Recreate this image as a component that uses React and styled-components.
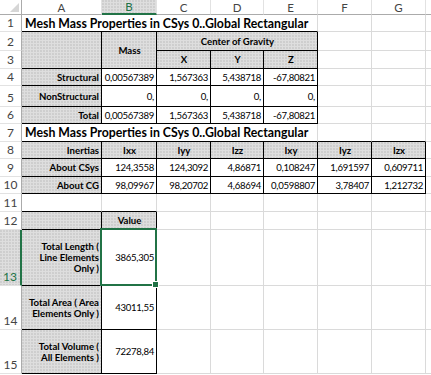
import React from "react";
import styled, { createGlobalStyle, css } from "styled-components";

const GREEN = "#217346";
const GRID = "#dadada";
const INK = "#000";

const GlobalStyle = createGlobalStyle`
  html, body {
    margin: 0;
    padding: 0;
    background: #fff;
  }
  body {
    font-family: Lato, "Open Sans", sans-serif;
  }
`;

// excel's stippled grey fill
const stipple = css`
  background-color: #dedede;
  background-image: radial-gradient(circle at 1px 1px, #c6c6c6 0.6px, transparent 0.9px);
  background-size: 3px 3px;
`;

const Sheet = styled.div`
  display: grid;
  grid-template-columns: 22px 80px 55px 54px 53px 54px 54px 54px 1fr;
  grid-template-rows: 15px 17px 19px 18px 17px 21px 17px 18px 17px 18px 17px 18px 18px 56px 44px 44px 1fr;
  width: 431px;
  height: 375px;
  overflow: hidden;
  font-family: Lato, "Open Sans", sans-serif;
`;

const Corner = styled.div`
  grid-row: 1;
  grid-column: 1;
  box-sizing: border-box;
  display: flex;
  align-items: flex-end;
  justify-content: flex-end;
  padding: 0 2px 2px 0;
  border-right: 1px solid #ababab;
  border-bottom: 1px solid #ababab;
`;

const CornerMark = styled.div`
  width: 9px;
  height: 9px;
  background: #d6d6d6;
  clip-path: polygon(100% 0, 100% 100%, 0 100%);
`;

const ColHead = styled.div`
  grid-row: 1;
  grid-column: ${(p) => p.$col};
  box-sizing: border-box;
  display: flex;
  align-items: center;
  justify-content: center;
  font-size: 11.5px;
  color: ${(p) => (p.$active ? GREEN : "#444")};
  border-right: 1px solid #e2e2e2;
  border-bottom: ${(p) => (p.$active ? `2px solid ${GREEN}` : "1px solid #ababab")};
  ${(p) => p.$active && stipple}
`;

const RowHead = styled.div`
  grid-row: ${(p) => p.$row};
  grid-column: 1;
  box-sizing: border-box;
  display: flex;
  align-items: flex-end;
  justify-content: center;
  padding-bottom: 1px;
  font-size: 12px;
  line-height: 14px;
  color: ${(p) => (p.$active ? GREEN : "#444")};
  border-bottom: 1px solid #e2e2e2;
  border-right: ${(p) => (p.$active ? `2px solid ${GREEN}` : "1px solid #ababab")};
  ${(p) => p.$active && stipple}
`;

const Cell = styled.div`
  grid-row: ${(p) => p.$row} / span ${(p) => p.$rowSpan};
  grid-column: ${(p) => p.$col} / span ${(p) => p.$colSpan};
  position: relative;
  box-sizing: border-box;
  min-width: 0;
  display: flex;
  align-items: center;
  justify-content: ${(p) => p.$justify};
  text-align: ${(p) => p.$align};
  padding: 0 2px 0 3px;
  border-right: 1px solid ${(p) => p.$right};
  border-bottom: 1px solid ${(p) => p.$bottom};
  white-space: pre;
  overflow: ${(p) => (p.$kind === "title" || p.$selected ? "visible" : "hidden")};
  color: #000;
  font-size: ${(p) => (p.$kind === "title" ? "12.3px" : "9.6px")};
  line-height: 11px;
  font-weight: ${(p) => (["title", "head", "label"].includes(p.$kind) ? 700 : 400)};
  letter-spacing: ${(p) => (p.$kind === "num" ? "-0.3px" : "0")};
  ${(p) => p.$fill && stipple}
`;

const Selection = styled.div`
  position: absolute;
  left: -2px;
  top: -2px;
  right: -1px;
  bottom: -1px;
  border: 2px solid ${GREEN};
  z-index: 2;
  pointer-events: none;
`;

const FillHandle = styled.div`
  position: absolute;
  right: -4px;
  bottom: -4px;
  width: 5px;
  height: 5px;
  background: ${GREEN};
  border: 1px solid #fff;
`;

const COLS = ["A", "B", "C", "D", "E", "F", "G", "H"];
const ROWS = 15;

const boxes = [
  [2, 1, 6, 5],
  [8, 1, 10, 7],
  [12, 1, 15, 2],
];
const filled = [
  [2, 1, 3, 5],
  [4, 1, 6, 1],
  [8, 1, 8, 7],
  [9, 1, 10, 1],
  [12, 1, 12, 2],
  [13, 1, 15, 1],
];

const inside = (list, r, c) =>
  list.some(([r1, c1, r2, c2]) => r >= r1 && r <= r2 && c >= c1 && c <= c2);

const title = "Mesh Mass Properties in CSys 0..Global Rectangular";

const content = [
  { r: 1, c: 1, cs: 5, kind: "title", text: title },
  { r: 2, c: 1, rs: 2, kind: "label", text: "" },
  { r: 2, c: 2, rs: 2, kind: "head", text: "Mass" },
  { r: 2, c: 3, cs: 3, kind: "head", text: "Center of Gravity" },
  { r: 3, c: 3, kind: "head", text: "X" },
  { r: 3, c: 4, kind: "head", text: "Y" },
  { r: 3, c: 5, kind: "head", text: "Z" },
  { r: 4, row: ["Structural", "0,00567389", "1,567363", "5,438718", "-67,80821"] },
  { r: 5, row: ["NonStructural", "0,", "0,", "0,", "0,"] },
  { r: 6, row: ["Total", "0,00567389", "1,567363", "5,438718", "-67,80821"] },
  { r: 7, c: 1, cs: 5, kind: "title", text: title },
  { r: 8, c: 1, kind: "label", text: "Inertias" },
  ...["Ixx", "Iyy", "Izz", "Ixy", "Iyz", "Izx"].map((t, i) => ({ r: 8, c: i + 2, kind: "head", text: t })),
  { r: 9, row: ["About CSys", "124,3558", "124,3092", "4,86871", "0,108247", "1,691597", "0,609711"] },
  { r: 10, row: ["About CG", "98,09967", "98,20702", "4,68694", "0,0598807", "3,78407", "1,212732"] },
  { r: 12, c: 2, kind: "head", text: "Value" },
  { r: 13, row: ["Total Length (\nLine Elements\nOnly )", "3865,305"] },
  { r: 14, row: ["Total Area ( Area\nElements Only )", "43011,55"] },
  { r: 15, row: ["Total Volume (\nAll Elements )", "72278,84"] },
];

const buildCells = () => {
  const defined = [];
  content.forEach((item) => {
    if (item.row) {
      item.row.forEach((text, i) =>
        defined.push({ r: item.r, c: i + 1, kind: i === 0 ? "label" : "num", text })
      );
    } else {
      defined.push(item);
    }
  });

  const covered = new Set();
  const cells = [];
  defined.forEach((d) => {
    const cell = { rs: 1, cs: 1, ...d };
    for (let i = 0; i < cell.rs; i++)
      for (let j = 0; j < cell.cs; j++) covered.add(`${cell.r + i}:${cell.c + j}`);
    cells.push(cell);
  });
  for (let r = 1; r <= ROWS; r++)
    for (let c = 1; c <= COLS.length; c++)
      if (!covered.has(`${r}:${c}`)) cells.push({ r, c, rs: 1, cs: 1, kind: "blank", text: "" });

  return cells.map((cell) => {
    const { r, c, rs, cs } = cell;
    let right = GRID;
    for (let i = r; i < r + rs; i++)
      if (inside(boxes, i, c + cs - 1) || inside(boxes, i, c + cs)) right = INK;
    let bottom = GRID;
    for (let j = c; j < c + cs; j++)
      if (inside(boxes, r + rs - 1, j) || inside(boxes, r + rs, j)) bottom = INK;
    if (c === COLS.length) right = "transparent";
    return { ...cell, right, bottom, fill: inside(filled, r, c) };
  });
};

const justifyFor = (kind) => {
  if (kind === "head") return ["center", "center"];
  if (kind === "label" || kind === "num") return ["flex-end", "right"];
  return ["flex-start", "left"];
};

const App = () => {
  const cells = buildCells();
  return (
    <>
      <GlobalStyle />
      <Sheet>
        <Corner>
          <CornerMark />
        </Corner>
        {COLS.map((letter, i) => (
          <ColHead key={letter} $col={i + 2} $active={letter === "B"}>
            {letter !== "H" && letter}
          </ColHead>
        ))}
        {Array.from({ length: ROWS }, (_, i) => (
          <RowHead key={i} $row={i + 2} $active={i + 1 === 13}>
            {i + 1}
          </RowHead>
        ))}
        {cells.map((cell) => {
          const [justify, align] = justifyFor(cell.kind);
          const selected = cell.r === 13 && cell.c === 2;
          return (
            <Cell
              key={`${cell.r}-${cell.c}`}
              $row={cell.r + 1}
              $col={cell.c + 1}
              $rowSpan={cell.rs}
              $colSpan={cell.cs}
              $kind={cell.kind}
              $justify={justify}
              $align={align}
              $right={cell.right}
              $bottom={cell.bottom}
              $fill={cell.fill}
              $selected={selected}
            >
              {cell.text}
              {selected && (
                <Selection>
                  <FillHandle />
                </Selection>
              )}
            </Cell>
          );
        })}
      </Sheet>
    </>
  );
};

export default App;
